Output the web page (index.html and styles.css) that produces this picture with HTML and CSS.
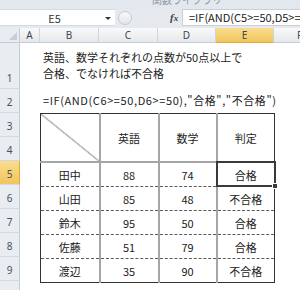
FILE: index.html
```html
<!DOCTYPE html>
<html lang="ja">
<head>
    <meta charset="UTF-8">
    <meta name="viewport" content="width=device-width, initial-scale=1.0">
    <title>IF AND 関数</title>
    <link rel="stylesheet" href="styles.css">
</head>
<body>
    <div class="app">
        <div class="ribbon"><span class="ribbon-label">関数ライブラリ</span></div>
        <div class="formula-bar">
            <div class="name-box">
                <span class="name-value">E5</span>
                <span class="name-drop"></span>
            </div>
            <div class="splitter"></div>
            <div class="fx">f<span class="fx-x">x</span></div>
            <div class="formula-input">=IF(AND(C5&gt;=50,D5&gt;=50),"合格","不合格")</div>
        </div>
        <div class="sheet">
            <div class="corner"><span class="corner-tri"></span></div>
            <div class="col-heads">
                <div class="col-head col-a">A</div>
                <div class="col-head col-b">B</div>
                <div class="col-head col-c">C</div>
                <div class="col-head col-d">D</div>
                <div class="col-head col-e active">E</div>
                <div class="col-head col-f">F</div>
            </div>
            <div class="row-heads">
                <div class="row-head tall">1</div>
                <div class="row-head">2</div>
                <div class="row-head">3</div>
                <div class="row-head">4</div>
                <div class="row-head active">5</div>
                <div class="row-head">6</div>
                <div class="row-head">7</div>
                <div class="row-head">8</div>
                <div class="row-head">9</div>
                <div class="row-head">10</div>
            </div>
            <div class="cells">
                <div class="note">英語、数学それぞれの点数が50点以上で<br>合格、でなければ不合格</div>
                <div class="formula-note">=IF(AND(C6&gt;=50,D6&gt;=50),"合格","不合格")</div>
                <table class="score-table">
                    <colgroup>
                        <col class="w-name">
                        <col class="w-score">
                        <col class="w-score2">
                        <col class="w-result">
                    </colgroup>
                    <thead>
                        <tr>
                            <th class="diag"></th>
                            <th class="sep-dash">英語</th>
                            <th>数学</th>
                            <th>判定</th>
                        </tr>
                    </thead>
                    <tbody>
                        <tr>
                            <td>田中</td>
                            <td class="sep-dash">88</td>
                            <td>74</td>
                            <td class="selected">合格<span class="sel-box"></span><span class="fill-handle"></span></td>
                        </tr>
                        <tr>
                            <td>山田</td>
                            <td class="sep-dash">85</td>
                            <td>48</td>
                            <td>不合格</td>
                        </tr>
                        <tr>
                            <td>鈴木</td>
                            <td class="sep-dash">95</td>
                            <td>50</td>
                            <td>合格</td>
                        </tr>
                        <tr>
                            <td>佐藤</td>
                            <td class="sep-dash">51</td>
                            <td>79</td>
                            <td>合格</td>
                        </tr>
                        <tr>
                            <td>渡辺</td>
                            <td class="sep-dash">35</td>
                            <td>90</td>
                            <td>不合格</td>
                        </tr>
                    </tbody>
                </table>
            </div>
        </div>
    </div>
</body>
</html>
```

FILE: styles.css
```css
body {
    margin: 0;
    font-family: "Noto Sans CJK JP", "Noto Sans", sans-serif;
    background: #ffffff;
    color: #222;
}

.app {
    width: 300px;
    height: 290px;
    overflow: hidden;
}

/* ribbon strip, mostly cut off */
.ribbon {
    height: 9px;
    background: #e3e8ee;
    overflow: hidden;
}

.ribbon-label {
    display: block;
    margin: -5px 0 0 152px;
    font-size: 10px;
    line-height: 10px;
    color: #8f98a3;
}

/* formula bar */
.formula-bar {
    display: flex;
    align-items: stretch;
    height: 17px;
    background: #e6eaef;
    border-bottom: 2px solid #e6eaef;
}

.name-box {
    display: flex;
    align-items: center;
    width: 115px;
    background: #ffffff;
    border-top: 1px solid #d6dbe1;
    border-bottom: 1px solid #d6dbe1;
    box-sizing: border-box;
}

.name-value {
    flex: 1;
    text-align: center;
    font-size: 11px;
    color: #333;
    padding-left: 4px;
}

.name-drop {
    width: 0;
    height: 0;
    margin: 1px 4px 0 0;
    border-left: 3px solid transparent;
    border-right: 3px solid transparent;
    border-top: 3px solid #333;
}

.splitter {
    width: 14px;
    height: 14px;
    margin: 2px 0 0 3px;
    border-radius: 50%;
    border: 1px solid #c4cbd3;
    background: linear-gradient(#f7f8fa, #e2e6eb);
    box-sizing: border-box;
}

.fx {
    width: 12px;
    margin-left: 38px;
    font-family: "Liberation Serif", serif;
    font-style: italic;
    font-weight: bold;
    font-size: 11px;
    line-height: 17px;
    color: #444;
}

.fx-x {
    font-size: 9px;
}

.formula-input {
    flex: 1;
    background: #ffffff;
    border: 1px solid #c9cfd6;
    border-right: none;
    padding-left: 6px;
    font-size: 11px;
    line-height: 15px;
    white-space: nowrap;
    overflow: hidden;
    color: #222;
}

/* sheet */
.sheet {
    display: grid;
    grid-template-columns: 20px 1fr;
    grid-template-rows: 15px 1fr;
}

.corner {
    position: relative;
    background: #e9ecf0;
    border-right: 1px solid #c6ccd4;
    border-bottom: 1px solid #c6ccd4;
    box-sizing: border-box;
}

.corner-tri {
    position: absolute;
    right: 2px;
    bottom: 2px;
    width: 0;
    height: 0;
    border-left: 8px solid transparent;
    border-bottom: 8px solid #c9ced5;
}

.col-heads {
    display: flex;
}

.col-head {
    height: 15px;
    box-sizing: border-box;
    background: linear-gradient(#f8f9fa, #e5e8ec);
    border-right: 1px solid #d0d5dc;
    border-bottom: 1px solid #c6ccd4;
    text-align: center;
    font-family: "Noto Sans", sans-serif;
    font-size: 10px;
    line-height: 14px;
    color: #3f4650;
}

.col-a { width: 20px; }
.col-b { width: 59px; }
.col-c { width: 59px; }
.col-d { width: 58px; }
.col-e { width: 58px; }
.col-f { flex: 1; border-right: none; text-align: left; padding-left: 23px; }

.col-head.active {
    background: linear-gradient(#f9dc8f, #f2c55c);
    border-bottom-color: #e0a93a;
}

.row-heads {
    display: flex;
    flex-direction: column;
}

.row-head {
    height: 24px;
    box-sizing: border-box;
    background: #e9ecf0;
    border-right: 1px solid #c6ccd4;
    border-bottom: 1px solid #d3d8de;
    display: flex;
    align-items: flex-end;
    justify-content: center;
    padding-bottom: 4px;
    font-family: "Noto Sans", sans-serif;
    font-size: 10px;
    line-height: 12px;
    color: #4a515a;
}

.row-head.tall {
    height: 46px;
}

.row-head.active {
    background: linear-gradient(#f9dc8f, #f2c55c);
    border-right-color: #e0a93a;
}

.cells {
    padding-left: 20px;
}

.note {
    height: 46px;
    box-sizing: border-box;
    padding: 6px 0 0 3px;
    font-size: 11px;
    line-height: 16px;
    white-space: nowrap;
}

.formula-note {
    height: 24px;
    box-sizing: border-box;
    padding: 3px 0 0 3px;
    font-size: 11px;
    line-height: 16px;
    letter-spacing: 0.6px;
    white-space: nowrap;
}

/* score table */
.score-table {
    border-collapse: collapse;
    table-layout: fixed;
    width: 235px;
    font-size: 11px;
    color: #222;
}

.w-name { width: 59px; }
.w-score { width: 59px; }
.w-score2 { width: 58px; }
.w-result { width: 58px; }

.score-table th,
.score-table td {
    padding: 0;
    text-align: center;
    font-weight: normal;
    border-left: 2px solid #a6a6a6;
    border-right: 2px solid #a6a6a6;
    border-bottom: 1px dashed #5a5a5a;
}

.score-table th {
    height: 47px;
    border-top: 1px solid #333;
    border-bottom: 2px solid #a6a6a6;
}

.score-table td {
    height: 23px;
}

.score-table .sep-dash {
    border-right: 1px dashed #5a5a5a;
}

.score-table tr > :first-child {
    border-left: 1px solid #333;
}

.score-table tr > :last-child {
    border-right: 1px solid #333;
}

.score-table tbody tr:last-child td {
    border-bottom: 1px solid #333;
}

.score-table .diag {
    background: linear-gradient(to top right, transparent calc(50% - 0.6px), #444 50%, transparent calc(50% + 0.6px));
}

.selected {
    position: relative;
}

.sel-box {
    position: absolute;
    left: -2px;
    top: -2px;
    right: -2px;
    bottom: -1px;
    border: 2px solid #3a3a3a;
}

.fill-handle {
    position: absolute;
    right: -4px;
    bottom: -3px;
    width: 4px;
    height: 4px;
    background: #3a3a3a;
    border: 1px solid #ffffff;
}
```
